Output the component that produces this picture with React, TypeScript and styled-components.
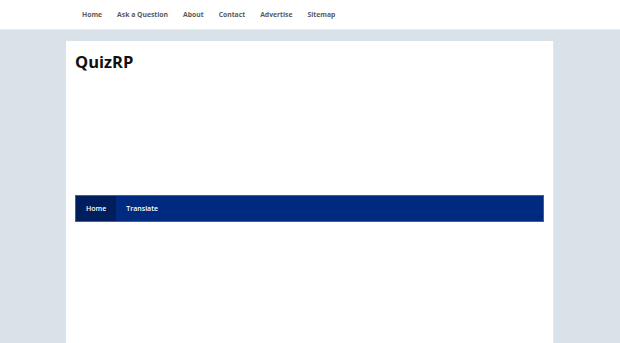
import React from "react"
import styled, { createGlobalStyle } from "styled-components"

const GlobalStyle = createGlobalStyle`
  body {
    margin: 0;
    background: #d9e2e8;
    font-family: "Open Sans", "Liberation Sans", sans-serif;
    overflow: hidden;
  }
`

const topLinks = ["Home", "Ask a Question", "About", "Contact", "Advertise", "Sitemap"]
const menuLinks = ["Home", "Translate"]

const App = () => (
  <>
    <GlobalStyle />
    <TopBar>
      <TopNav>
        {topLinks.map((l) => (
          <TopLink key={l}>{l}</TopLink>
        ))}
      </TopNav>
    </TopBar>
    <Page>
      <Header>
        <Title>QuizRP</Title>
      </Header>
      <Menu>
        {menuLinks.map((l, i) => (
          <MenuItem key={l} active={i === 0}>
            {l}
          </MenuItem>
        ))}
      </Menu>
    </Page>
  </>
)

const TopBar = styled.div`
  height: 29px;
  background: #fff;
  border-bottom: 1px solid #e8ecef;
  display: flex;
  align-items: center;
`

const TopNav = styled.nav`
  display: flex;
  gap: 15px;
  margin-left: 82px;
  padding-bottom: 1px;
`

const TopLink = styled.a`
  font-size: 6.8px;
  font-weight: 700;
  color: #5a5a5a;
`

const Page = styled.main`
  width: 488px;
  margin: 11px 0 0 66px;
  height: 302px;
  background: #fff;
  border-right: 1px solid #e3e8ec;
  padding: 0 9px;
  box-sizing: border-box;
`

const Header = styled.header`
  height: 154px;
  padding-top: 10px;
  box-sizing: border-box;
`

const Title = styled.h1`
  margin: 0;
  font-size: 16.5px;
  font-weight: 700;
  color: #111;
  line-height: 22px;
`

const Menu = styled.nav`
  display: flex;
  height: 27px;
  background: #002a80;
  border: 1px solid #2d62b8;
  box-sizing: border-box;
`

const MenuItem = styled.a<{ active?: boolean }>`
  display: flex;
  align-items: center;
  padding: 0 10px;
  font-size: 7px;
  font-weight: 600;
  color: #fff;
  background: ${(p) => (p.active ? "#001d5c" : "transparent")};
`

export default App
